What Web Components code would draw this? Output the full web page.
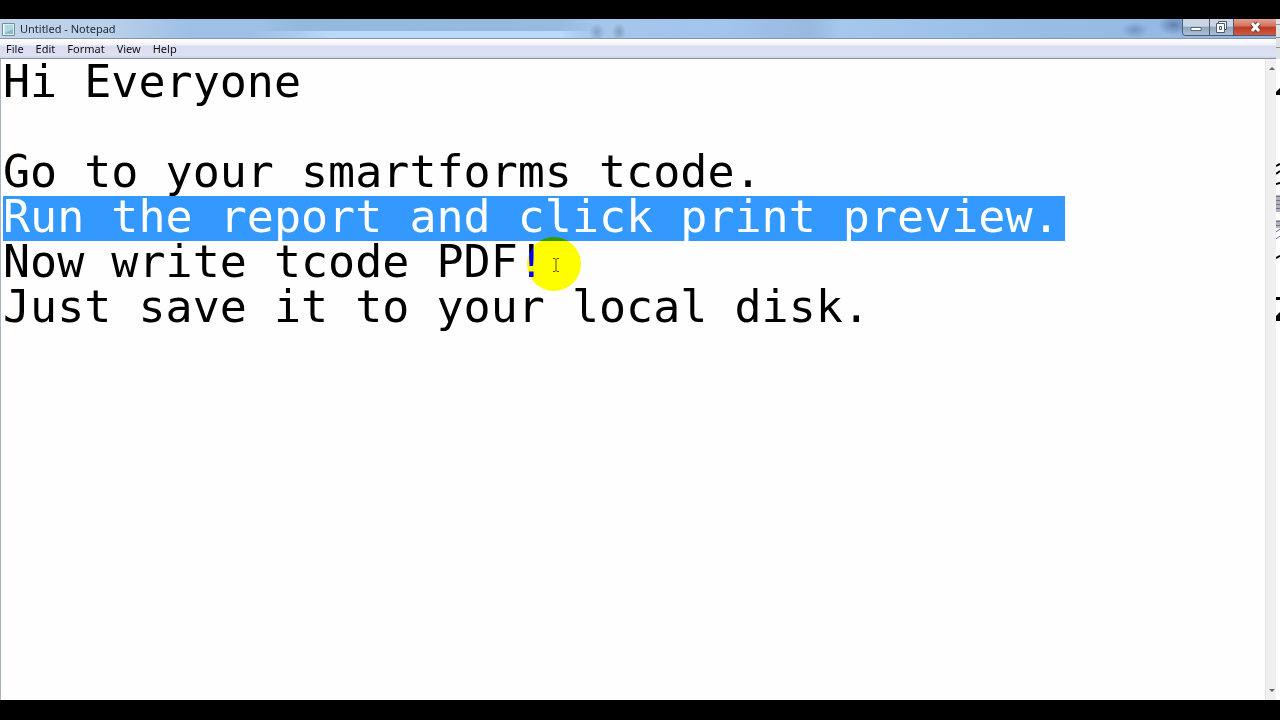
<!DOCTYPE html>
<html lang="en">
<head>
<meta charset="utf-8">
<title>Untitled - Notepad</title>
<style>
body { margin: 0; background: #000; font-family: "Noto Sans", sans-serif; }
</style>
</head>
<body>
<notepad-desktop>
  <notepad-window>
    <title-bar slot="title">Untitled - Notepad</title-bar>
    <menu-bar slot="menu">
      <menu-item>File</menu-item>
      <menu-item>Edit</menu-item>
      <menu-item>Format</menu-item>
      <menu-item>View</menu-item>
      <menu-item>Help</menu-item>
    </menu-bar>
    <text-editor></text-editor>
    <scroll-bar slot="scroll"></scroll-bar>
  </notepad-window>
  <behind-strip slot="behind"></behind-strip>
</notepad-desktop>
<script>
function define(name, html, setup) {
  const template = document.createElement('template');
  template.innerHTML = html;
  customElements.define(name, class extends HTMLElement {
    constructor() {
      super();
      this.attachShadow({ mode: 'open' }).append(template.content.cloneNode(true));
    }
    connectedCallback() { if (setup) setup(this.shadowRoot, this); }
  });
}

define('notepad-desktop', `
<style>
:host { display: grid; grid-template-columns: 1fr 4px; height: 100vh; box-sizing: border-box; padding: 19px 0 20px; overflow: hidden; background: #000; }
</style>
<slot></slot><slot name="behind"></slot>`);

define('notepad-window', `
<style>
:host { display: grid; grid-template-rows: 20px 20px 1fr; min-width: 0; min-height: 0; background: #fefefe; }
main { display: grid; grid-template-columns: 1fr 11px; min-height: 0; border-left: 1px solid #a9b4c4; }
</style>
<slot name="title"></slot><slot name="menu"></slot>
<main><slot></slot><slot name="scroll"></slot></main>`);

define('title-bar', `
<style>
:host { display: flex; align-items: stretch; justify-content: space-between; box-sizing: border-box; border-bottom: 1px solid #8795a5; color: #1c2733; font-size: 11px; line-height: 19px;
  background:
    radial-gradient(ellipse 14px 8px at 1135px 11px, #5f83b3aa, transparent),
    radial-gradient(ellipse 16px 10px at 1174px 6px, #4a699ab0, transparent),
    radial-gradient(ellipse 8px 9px at 597px 13px, #6f93b8aa, transparent),
    radial-gradient(ellipse 7px 9px at 619px 13px, #6f93a8bb, transparent),
    linear-gradient(90deg, #b9dafa00 250px, #b9dafa 330px, #b9dafa 560px, #b9dafa00 600px) 0 12px / 100% 7px no-repeat,
    linear-gradient(90deg, #c3d6ea 0, #b9d0ea 110px, #9dc0e6 190px, #9cc0e6 260px, #93b9de 300px, #97bbe0 560px, #a5c6ec 600px, #a2c5ee 720px, #98b9e0 810px, #a4c8ee 840px, #9abfe6 1000px, #8fb6e3 100%); }
.name { display: flex; gap: 4px; padding-left: 1px; }
svg { display: block; }
.icon { margin-top: 3px; }
.controls { display: grid; grid-template-columns: 27px 24px 42px; height: 16px; border: solid #4b5c72; border-width: 0 0 1px 1px; border-radius: 0 0 0 4px; overflow: hidden; }
button { display: grid; place-items: center; padding: 0; border: 0; border-right: 1px solid #4b5c72; background: linear-gradient(#c9d5e3 0 45%, #8fa3bc 50%, #aebfd3); }
.close { border-right: 0; background: linear-gradient(#e2a294, #d2705c 45%, #bd3922 50%, #d05a43); }
</style>
<div class="name">
<svg class="icon" width="15" height="15" viewBox="0 0 15 15"><path d="M1.500 1.500h12v12h-12z" fill="#dcebf0" stroke="#71909c"/><path d="M4 3h8v9H4z" fill="#85bdc8"/><path d="M4 3h8v4l-8 4z" fill="#add8df"/><path d="M2.500 2v11" stroke="#fff"/></svg>
<span><slot></slot></span></div>
<div class="controls">
<button aria-label="Minimize"><svg width="14" height="14"><path d="M2 7.500h10v3H2z" fill="#fff" stroke="#58697e"/></svg></button>
<button aria-label="Restore"><svg width="14" height="14"><path d="M3.500 1.500h8v8h-2v3h-8v-9h2z" fill="#fff" stroke="#4a5a6e"/><path d="M3.500 3.500h6v6M4.500 6.500h2v3h-2z" fill="none" stroke="#4a5a6e"/></svg></button>
<button class="close" aria-label="Close"><svg width="14" height="14"><path d="M4 3l7 8M11 3l-7 8" stroke="#763b38" stroke-width="5"/><path d="M4 3l7 8M11 3l-7 8" stroke="#fff" stroke-width="3"/></svg></button>
</div>`);

define('menu-bar', `
<style>
:host { display: flex; box-sizing: border-box; border-bottom: 1px solid #8794a4; background: linear-gradient(#fff, #f1f1f9 30%, #d7ddee 40%, #dfe1f4 85%, #c9d5e2); }
</style>
<slot></slot>`);

define('menu-item', `
<style>
:host { display: block; }
button { display: block; padding: 0 6px; border: 0; background: none; color: #111; font-family: inherit; font-size: 11px; line-height: 19px; }
</style>
<button><slot></slot></button>`);

define('text-editor', `
<style>
:host { display: block; position: relative; min-width: 0; overflow: hidden; }
textarea { display: block; box-sizing: border-box; width: 100%; height: 100%; margin: 0; padding: 0 2px; border: 0; outline: 0; resize: none; overflow: hidden; background: linear-gradient(#39f, #39f) 2px 137px / 1062px 45px no-repeat #fefefe; color: #000; caret-color: transparent; font: 45px/45px "DejaVu Sans Mono", monospace; white-space: pre; }
textarea::selection { background: transparent; color: #fff; }
.spot { position: absolute; left: 526px; top: 178px; width: 54px; height: 54px; border-radius: 50%; background: #00f; mix-blend-mode: difference; pointer-events: none; }
.beam { position: absolute; left: 551px; top: 198px; pointer-events: none; }
</style>
<textarea aria-label="Document text" spellcheck="false">Hi Everyone

Go to your smartforms tcode.
Run the report and click print preview.
Now write tcode PDF!
Just save it to your local disk.</textarea>
<div class="spot"></div>
<svg class="beam" width="8" height="16"><path d="M1 1.500h2l1 1 1-1h2M4 2v12M1 14.500h2l1-1 1 1h2" fill="none" stroke="#5b5b10"/></svg>`,
(root) => {
  const area = root.querySelector('textarea');
  const line = area.value.split('\n')[3];
  const start = area.value.indexOf(line);
  area.focus();
  area.setSelectionRange(start, start + line.length);
});

define('scroll-bar', `
<style>
:host { display: flex; flex-direction: column; justify-content: space-between; box-sizing: border-box; padding: 6px 0; border-left: 1px solid #e3e3e3; background: #f0f0f0; }
button { display: grid; justify-content: end; width: 100%; padding: 0; border: 0; background: none; }
svg { display: block; }
</style>
<button aria-label="Scroll up"><svg width="8" height="6"><path d="M1 5l3-3 3 3z" fill="#666"/></svg></button>
<button aria-label="Scroll down"><svg width="8" height="6"><path d="M1 1h6L4 4z" fill="#666"/></svg></button>`);

define('behind-strip', `
<style>
:host { display: block; overflow: hidden; background: #fff; }
svg { display: block; }
</style>
<svg width="4" height="681" aria-hidden="true">
<path d="M0 0h4v40H0z" fill="#dfe3e6"/><path d="M0 5.500h4M0 18.500h4M0 28.500h4" stroke="#8b9298"/>
<path d="M0 76v-3l4-4v7z"/>
<path d="M0 147l4-2M0 155l4-3M0 165l4-1M0 239l4-2" stroke="#000" stroke-width="2"/>
<path d="M0 176h4v17H0zM0 201h4v8H0z" fill="#b5b0bd"/>
<path d="M0 177.500h4M0 181.500h4M0 185.500h4M0 189.500h4M0 202.500h4M0 206.500h4M0 213l4-3M0 220l4-3" stroke="#777087"/>
<path d="M0 278h4v3H0zM0 302v-5l4-4v9z"/>
</svg>`);
</script>
</body>
</html>
